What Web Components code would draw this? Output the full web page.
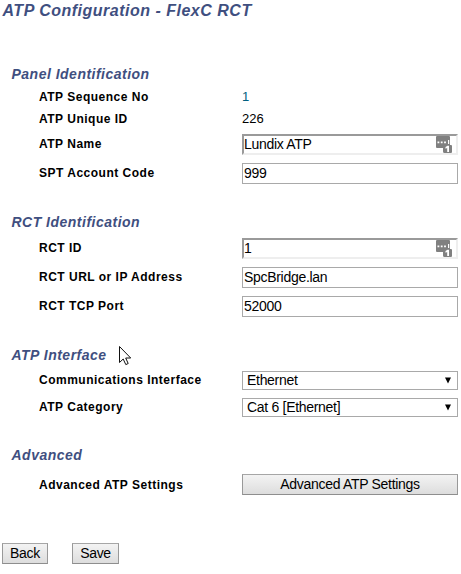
<!DOCTYPE html>
<html lang="en"><head><meta charset="utf-8"><title>ATP Configuration</title>
<style>
html,body{margin:0;background:#fff;overflow:hidden}
body{font-family:"Liberation Sans",Arial,sans-serif;color:#000}
</style></head><body>
<config-page heading="ATP Configuration - FlexC RCT">
 <form-section heading="Panel Identification">
  <form-row label="ATP Sequence No" style="--h:22px;--up:0"><plain-value style="color:#006080">1</plain-value></form-row>
  <form-row label="ATP Unique ID" style="--h:22px;--up:0"><plain-value>226</plain-value></form-row>
  <form-row label="ATP Name"><text-field managed>Lundix ATP</text-field></form-row>
  <form-row label="SPT Account Code"><text-field>999</text-field></form-row>
 </form-section>
 <form-section heading="RCT Identification">
  <form-row label="RCT ID"><text-field managed>1</text-field></form-row>
  <form-row label="RCT URL or IP Address"><text-field>SpcBridge.lan</text-field></form-row>
  <form-row label="RCT TCP Port"><text-field>52000</text-field></form-row>
 </form-section>
 <form-section heading="ATP Interface">
  <form-row label="Communications Interface" style="--h:27px"><select-field>Ethernet</select-field></form-row>
  <form-row label="ATP Category" style="--h:27px"><select-field>Cat 6 [Ethernet]</select-field></form-row>
 </form-section>
 <form-section heading="Advanced">
  <form-row label="Advanced ATP Settings" style="--h:34px;--up:0;--down:2px"><push-button style="width:216px">Advanced ATP Settings</push-button></form-row>
 </form-section>
 <push-button slot="actions" style="width:46px">Back</push-button>
 <push-button slot="actions" style="width:47px">Save</push-button>
</config-page>
<mouse-pointer></mouse-pointer>
<script>
function define(name, html){
  const t=document.createElement('template'); t.innerHTML=html;
  customElements.define(name, class extends HTMLElement{
    constructor(){
      super();
      const r=this.attachShadow({mode:'open'});
      r.append(t.content.cloneNode(true));
      r.querySelectorAll('[data-attr]').forEach(e=>{e.textContent=this.getAttribute(e.dataset.attr)||''});
    }
  });
}
define('config-page',`<style>
:host{display:block;width:461px;height:574px;box-sizing:border-box}
h1{margin:0;padding:1px 0 0 2.500px;height:62px;font:italic bold 16px/20px "Liberation Sans",Arial,sans-serif;letter-spacing:.5px;color:#3f4f80;box-sizing:border-box;white-space:nowrap}
main{display:flex;flex-direction:column;gap:22px}
footer{display:flex;gap:24px;padding:42px 0 0 2px}
</style><h1 data-attr="heading"></h1><main><slot></slot></main><footer><slot name="actions"></slot></footer>`);
define('form-section',`<style>
:host{display:block}
h2{margin:0;padding-left:11.500px;font:italic bold 14px/24px "Liberation Sans",Arial,sans-serif;letter-spacing:.49px;color:#3f4f80;white-space:nowrap}
</style><h2 data-attr="heading"></h2><slot></slot>`);
define('form-row',`<style>
:host{display:grid;grid-template-columns:203px 216px;padding-left:39px;height:var(--h,29px);align-items:center}
label{font:bold 12px/16px "Liberation Sans",Arial,sans-serif;letter-spacing:.5px;padding-top:var(--down,0);padding-bottom:var(--up,2px);white-space:nowrap}
</style><label data-attr="label"></label><slot></slot>`);
define('plain-value',`<style>:host{display:block;font-size:13px;line-height:16px}</style><slot></slot>`);
define('text-field',`<style>
:host{display:flex;justify-content:space-between;align-items:center;box-sizing:border-box;width:216px;height:21px;border:1px solid #a9a9a9;padding:0 1px;font-size:14px;letter-spacing:-.3px;line-height:17px;background:#fff}
:host([managed]){border:2px solid;border-color:#9a9a9a #eee #eee #9a9a9a;padding:0 3px 0 0}
svg{display:none}:host([managed]) svg{display:block}
</style><span><slot></slot></span>
<svg width="17" height="17" viewBox="0 0 17 17"><path d="M1 0h12q1 0 1 1v8h1q1 0 1 1v6q0 1-1 1H8.500q-1.500 0-1.500-1.500V12H1q-1 0-1-1V1q0-1 1-1z" fill="#808080"/><path d="M1.500 5.500h1.800v1.800H1.500zm3.300 0h1.800v1.800H4.800zm3.300 0h1.800v1.800H8.100zM12 4h1.200v4H12zM9.500 11l2-1.300H13V16h-1.800v-4L9.500 12.800z" fill="#fff"/></svg>`);
define('select-field',`<style>
:host{display:flex;justify-content:space-between;align-items:center;box-sizing:border-box;width:216px;height:19px;border:1px solid #a9a9a9;padding:0 5px 0 4px;font-size:14px;letter-spacing:-.3px;line-height:17px;background:#fff}
</style><span><slot></slot></span><svg width="8" height="7" viewBox="0 0 8 7"><path d="M1 .5h6L4 6.500z"/></svg>`);
define('push-button',`<style>
:host{display:flex;justify-content:center;align-items:center;box-sizing:border-box;height:21px;border:1px solid;border-color:#a6a6a6 #999 #8e8e8e #999;background:linear-gradient(#f3f3f3,#ddd);font-size:14px;letter-spacing:-.3px;line-height:17px;white-space:nowrap}
</style><slot></slot>`);
define('mouse-pointer',`<style>:host{position:absolute;left:119px;top:346px;width:13px;height:20px}svg{display:block}</style>
<svg width="13" height="20" viewBox="0 0 13 20"><path d="M.5.5v16l3.700-3.500 2.600 5.600 2.400-1.100-2.500-5.500h5z" fill="#fff" stroke="#111" stroke-width="1"/></svg>`);
</script></body></html>
